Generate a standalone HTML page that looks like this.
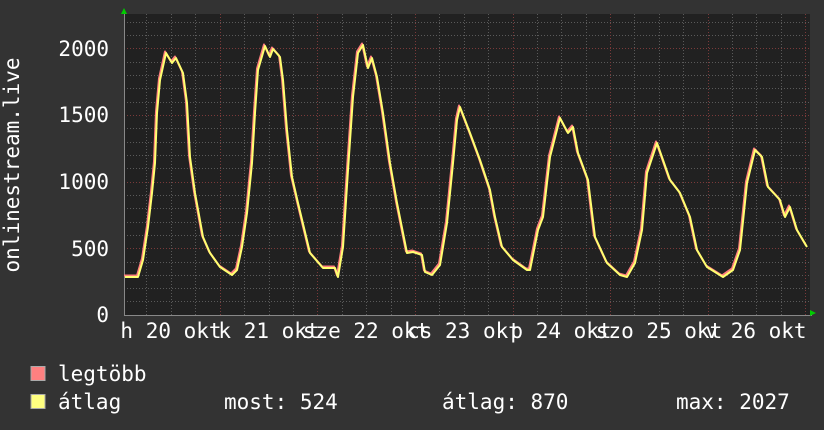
<!DOCTYPE html><html><head><style>body{margin:0;background:#333;}svg{display:block}text{font-family:"DejaVu Sans Mono","Liberation Mono",monospace;font-size:21px;fill:#fff}</style></head><body>
<svg width="824" height="430" viewBox="0 0 824 430">
<rect width="824" height="430" fill="#333"/>
<rect x="124" y="14" width="686" height="301" fill="#212121"/>
<g stroke="#5a5a5a" stroke-width="1" stroke-dasharray="1,2">
<path d="M124 301.5H810M124 288.5H810M124 275.5H810M124 262.5H810M124 235.5H810M124 222.5H810M124 208.5H810M124 195.5H810M124 168.5H810M124 155.5H810M124 142.5H810M124 128.5H810M124 102.5H810M124 88.5H810M124 75.5H810M124 62.5H810M124 35.5H810M124 22.5H810"/>
<path d="M146.5 14V315M171.5 14V315M195.5 14V315M244.5 14V315M269.5 14V315M293.5 14V315M342.5 14V315M366.5 14V315M391.5 14V315M439.5 14V315M464.5 14V315M488.5 14V315M537.5 14V315M561.5 14V315M586.5 14V315M634.5 14V315M659.5 14V315M683.5 14V315M732.5 14V315M756.5 14V315M781.5 14V315"/>
</g>
<g stroke="#7a3a3a" stroke-width="1" stroke-dasharray="1,2">
<path d="M124 248.5H810M124 182.5H810M124 115.5H810M124 48.5H810"/>
<path d="M220.5 14V315M317.5 14V315M415.5 14V315M513.5 14V315M610.5 14V315M708.5 14V315M805.5 14V315"/>
</g>
<path d="M124 315.5H812" stroke="#888"/>
<path d="M124.5 14V316" stroke="#888"/>
<path d="M121 14L124 8L127 14Z" fill="#0c0"/>
<path d="M810 310L816 313L810 316Z" fill="#0c0"/>
<g fill="none" stroke-width="2" stroke-linejoin="round">
<polyline stroke="#ff7f7f" transform="translate(-1,-1.5)" points="125,277 138,277 143,260 148,227 152,193 155,163 157,113 160,80 166,53 172,63 176,58 183,73 187,103 190,157 195,193 203,237 210,253 220,267 232,275 237,270 242,247 247,213 252,163 255,113 258,70 265,46 270,57 273,49 280,57 283,80 287,130 292,177 298,203 310,253 323,268 335,268 338,277 343,247 348,170 353,97 358,53 363,45 368,68 372,58 377,77 383,113 390,163 397,203 407,253 413,252 422,255 425,272 432,275 440,265 447,223 453,163 457,120 460,107 470,133 480,160 490,190 495,217 502,247 513,260 527,270 530,270 538,230 543,217 550,157 560,118 568,133 573,127 578,153 588,180 595,237 607,263 620,275 627,277 635,263 642,230 647,173 657,143 663,160 670,180 680,193 690,217 697,250 707,267 723,277 733,270 740,250 747,183 755,150 762,157 768,187 780,200 785,217 790,207 797,230 807,247"/>
<polyline stroke="#ffff70" points="125,277 138,277 143,260 148,227 152,193 155,163 157,113 160,80 166,53 172,63 176,58 183,73 187,103 190,157 195,193 203,237 210,253 220,267 232,275 237,270 242,247 247,213 252,163 255,113 258,70 265,46 270,57 273,49 280,57 283,80 287,130 292,177 298,203 310,253 323,268 335,268 338,277 343,247 348,170 353,97 358,53 363,45 368,68 372,58 377,77 383,113 390,163 397,203 407,253 413,252 422,255 425,272 432,275 440,265 447,223 453,163 457,120 460,107 470,133 480,160 490,190 495,217 502,247 513,260 527,270 530,270 538,230 543,217 550,157 560,118 568,133 573,127 578,153 588,180 595,237 607,263 620,275 627,277 635,263 642,230 647,173 657,143 663,160 670,180 680,193 690,217 697,250 707,267 723,277 733,270 740,250 747,183 755,150 762,157 768,187 780,200 785,217 790,207 797,230 807,247"/>
</g>
<g text-anchor="end">
<text x="109" y="56">2000</text><text x="109" y="122">1500</text><text x="109" y="189">1000</text><text x="109" y="256">500</text><text x="109" y="322">0</text>
</g>
<text transform="translate(19,165) rotate(-90)" text-anchor="middle">onlinestream.live</text>
<g text-anchor="middle">
<text x="171" y="338">h 20 okt</text><text x="269" y="338">k 21 okt</text><text x="366" y="338">sze 22 okt</text><text x="464" y="338">cs 23 okt</text><text x="561" y="338">p 24 okt</text><text x="659" y="338">szo 25 okt</text><text x="756" y="338">v 26 okt</text>
</g>
<rect x="31" y="366.5" width="14" height="14" fill="#ff8080" stroke="#aaa" stroke-width="1"/>
<rect x="31" y="394.5" width="14" height="14" fill="#ffff80" stroke="#aaa" stroke-width="1"/>
<text x="58" y="381">legtöbb</text>
<text x="58" y="409">átlag</text>
<text x="224" y="409">most: 524</text>
<text x="442" y="409">átlag: 870</text>
<text x="676" y="409">max: 2027</text>
</svg></body></html>
